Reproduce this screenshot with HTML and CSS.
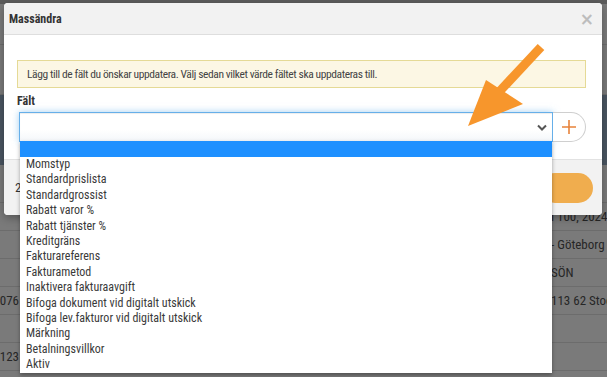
FILE: index.html
```html
<!DOCTYPE html>
<html lang="sv">
<head>
    <meta charset="UTF-8">
    <title>Massändra</title>
    <link rel="stylesheet" href="styles.css">
</head>
<body>
    <div class="page">
        <div class="topbar"></div>
        <div class="row row-top"></div>
        <div class="row row-mid"><span class="cell-left">n</span></div>
        <div class="table-head"><span class="cell-right">b</span></div>
        <div class="row row-first"></div>
        <div class="row"><span class="cell-left"></span><span class="cell-right">l 100, 20243</span></div>
        <div class="row"><span class="cell-left"></span><span class="cell-right">- Göteborg</span></div>
        <div class="row"><span class="cell-left"></span><span class="cell-right">SÖN</span></div>
        <div class="row"><span class="cell-left">076</span><span class="cell-right">113 62 Stockholm</span></div>
        <div class="row"><span class="cell-left"></span><span class="cell-right"></span></div>
        <div class="row"><span class="cell-left">123</span><span class="cell-right"></span></div>
    </div>

    <div class="modal">
        <div class="modal-header">
            <h4>Massändra</h4>
            <span class="close">×</span>
        </div>
        <div class="modal-body">
            <div class="alert">Lägg till de fält du önskar uppdatera. Välj sedan vilket värde fältet ska uppdateras till.</div>
            <label class="field-label">Fält</label>
            <div class="select-row">
                <div class="select">
                    <svg class="chevron" width="10" height="7" viewBox="0 0 10 7"><polyline points="1,1.5 5,5.5 9,1.5" fill="none" stroke="#555" stroke-width="2"/></svg>
                </div>
                <button class="add-btn">
                    <svg width="14" height="14" viewBox="0 0 14 14"><path d="M7 0v14M0 7h14" stroke="#e8833a" stroke-width="1.6"/></svg>
                </button>
            </div>
        </div>
        <div class="modal-footer">
            <span class="footer-text">2</span>
            <button class="save-btn"></button>
        </div>
    </div>

    <ul class="dropdown">
        <li class="selected"></li>
        <li>Momstyp</li>
        <li>Standardprislista</li>
        <li>Standardgrossist</li>
        <li>Rabatt varor %</li>
        <li>Rabatt tjänster %</li>
        <li>Kreditgräns</li>
        <li>Fakturareferens</li>
        <li>Fakturametod</li>
        <li>Inaktivera fakturaavgift</li>
        <li>Bifoga dokument vid digitalt utskick</li>
        <li>Bifoga lev.fakturor vid digitalt utskick</li>
        <li>Märkning</li>
        <li>Betalningsvillkor</li>
        <li>Aktiv</li>
    </ul>

    <svg class="arrow" width="607" height="377" viewBox="0 0 607 377">
        <line x1="541" y1="47" x2="499" y2="92" stroke="#f7962c" stroke-width="9"/>
        <polygon points="486,80 523,104 468,126" fill="#f7962c"/>
    </svg>
</body>
</html>
```

FILE: styles.css
```css
body {
    margin: 0;
    width: 607px;
    height: 377px;
    overflow: hidden;
    background-color: #7a7a7a;
    font-family: Roboto, "DejaVu Sans Condensed", sans-serif;
    font-stretch: 80%;
    font-size: 12px;
    color: #333;
    position: relative;
}

/* Dimmed page behind the modal */
.page {
    display: flex;
    flex-direction: column;
}

.topbar {
    height: 4px;
    background-color: #5c5c5c;
}

.row {
    height: 28px;
    border-bottom: 1px solid #6c6c6c;
    display: flex;
    align-items: center;
    justify-content: space-between;
    color: #262626;
    font-size: 13px;
    box-sizing: border-box;
}

.row-top {
    height: 41px;
}

.row-mid {
    height: 50px;
}

.row-first {
    height: 38px;
}

.table-head {
    height: 70px;
    background-color: #4a5561;
    display: flex;
    align-items: center;
    justify-content: flex-end;
    color: #1f2a33;
    font-size: 13px;
    padding-top: 56px;
    box-sizing: border-box;
}

.cell-left {
    width: 19px;
    overflow: hidden;
    white-space: nowrap;
    direction: rtl;
}

.cell-right {
    width: 56px;
    overflow: hidden;
    white-space: nowrap;
}

/* Modal */
.modal {
    position: absolute;
    left: 4px;
    top: 3px;
    width: 598px;
    height: 212px;
    background-color: #fff;
    border-radius: 4px;
    box-shadow: 0 3px 9px rgba(0, 0, 0, 0.3);
    display: flex;
    flex-direction: column;
    overflow: hidden;
}

.modal-header {
    height: 31px;
    background-color: #f2f2f2;
    border-bottom: 1px solid #dedede;
    display: flex;
    align-items: center;
    justify-content: space-between;
    padding: 0 8px 0 5px;
}

.modal-header h4 {
    margin: 0;
    font-size: 12px;
    font-weight: bold;
    font-stretch: 75%;
    color: #333;
}

.close {
    color: #bdbdbd;
    font-size: 17px;
    font-weight: bold;
    font-family: "DejaVu Sans", sans-serif;
    font-stretch: normal;
}

.modal-body {
    flex: 1;
    padding: 25px 16px 0 13px;
}

.alert {
    height: 28px;
    box-sizing: border-box;
    background-color: #fcf7e4;
    border: 1px solid #e5da96;
    padding: 0 9px;
    display: flex;
    align-items: center;
    color: #444;
    font-size: 11.5px;
    font-stretch: 75%;
    letter-spacing: -0.4px;
}

.field-label {
    display: block;
    font-weight: bold;
    margin: 6px 0 4px;
    color: #333;
}

.select-row {
    display: flex;
    margin-left: 2px;
}

.select {
    flex: 1;
    height: 30px;
    box-sizing: border-box;
    border: 1px solid #66afe9;
    background: linear-gradient(#fff 60%, #f4f7fa);
    box-shadow: inset 0 1px 1px rgba(0, 0, 0, 0.075), 0 0 7px rgba(102, 175, 233, 0.6);
    display: flex;
    align-items: center;
    justify-content: flex-end;
    padding-right: 5px;
}

.add-btn {
    width: 33px;
    height: 30px;
    border: 1px solid #cfcfcf;
    border-left: none;
    border-radius: 0 15px 15px 0;
    background-color: #fff;
    display: flex;
    align-items: center;
    justify-content: center;
    padding: 0;
}

.modal-footer {
    height: 55px;
    background-color: #f2f2f2;
    border-top: 1px solid #e2e2e2;
    display: flex;
    align-items: center;
    justify-content: space-between;
    padding: 0 9px 0 11px;
}

.footer-text {
    font-size: 13px;
    color: #333;
}

.save-btn {
    width: 53px;
    height: 30px;
    border: none;
    border-radius: 15px;
    background-color: #f0ad4e;
}

/* Open select list */
.dropdown {
    position: absolute;
    left: 20px;
    top: 141px;
    width: 532px;
    height: 232px;
    margin: 0;
    padding: 0;
    list-style: none;
    background-color: #fff;
    box-shadow: 0 2px 4px rgba(0, 0, 0, 0.35);
    box-sizing: border-box;
}

.dropdown li {
    height: 15.4px;
    line-height: 15.4px;
    padding-left: 6px;
    color: #3a3a3a;
    white-space: nowrap;
}

.dropdown li.selected {
    height: 16px;
    background-color: #1e90ff;
}

.arrow {
    position: absolute;
    left: 0;
    top: 0;
    pointer-events: none;
}
```
